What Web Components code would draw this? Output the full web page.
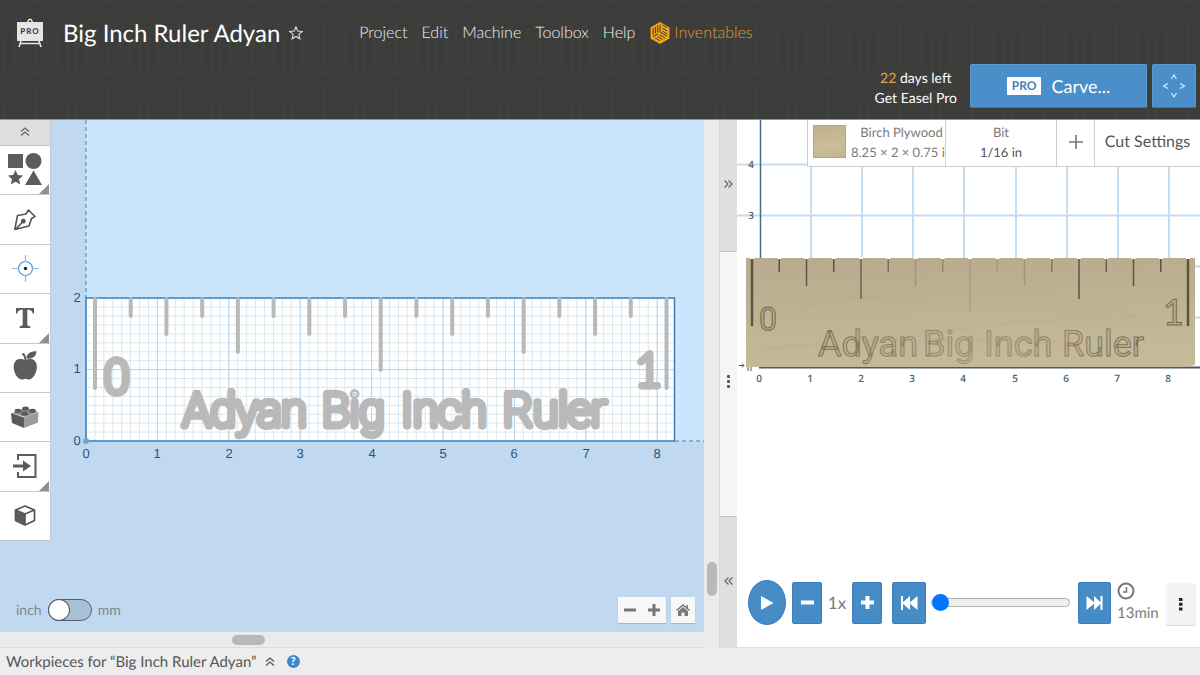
<!DOCTYPE html>
<html lang="en">
<head>
<meta charset="utf-8">
<meta name="viewport" content="width=device-width, initial-scale=1">
<title>Big Inch Ruler Adyan</title>
<style>
  html, body { margin: 0; height: 100%; }
  body { font-family: Lato, "Liberation Sans", sans-serif; text-rendering: geometricPrecision; color: #555; background: #fff; overflow: hidden; }
</style>
</head>
<body>
<easel-app></easel-app>

<script>
const BASE = `<style>
  *, *::before, *::after { box-sizing: border-box; }
  button { font: inherit; color: inherit; text-rendering: inherit; border: 0; padding: 0; margin: 0; background: none; cursor: pointer; display: flex; align-items: center; justify-content: center; }
  a { color: inherit; text-decoration: none; }
  svg { display: block; flex: none; }
</style>`;

function define(name, build) {
  customElements.define(name, class extends HTMLElement {
    constructor() {
      super();
      const t = document.createElement('template');
      t.innerHTML = BASE + build(this);
      this.attachShadow({ mode: 'open' }).append(t.content.cloneNode(true));
    }
  });
}

/* ---------- header ---------- */
define('easel-header', () => `<style>
  :host { display: flex; flex-direction: column; box-sizing: border-box; position: relative; background: #3c3d3b; color: #fff; height: 120px; border-bottom: 1px solid #8495a3; }
  .weave { position: absolute; inset: 0; width: 100%; height: 100%; }
  .top { position: relative; display: flex; align-items: center; height: 64px; padding: 2px 0 0 16px; }
  .title { font-size: 24px; line-height: 32px; margin: 0 9px 0 19px; font-weight: 400; padding-top: 2px; white-space: nowrap; }
  nav { display: flex; align-items: center; gap: 14px; margin-left: 56px; font-size: 16px; line-height: 24px; font-weight: 300; color: #eee; white-space: nowrap; }
  .brand { display: flex; align-items: center; gap: 4px; color: #e09a3a; margin-left: 1px; }
  .actions { position: relative; display: flex; justify-content: flex-end; gap: 5px; padding-right: 4px; }
  .trial { text-align: center; font-size: 14px; line-height: 20px; padding: 4px 8px 0 0; }
  .trial b { font-weight: 400; color: #e8a33d; }
  .actions button { height: 44px; background: #4a8fca; border: 1px solid #5b9bd2; border-bottom-color: #3a78ae; border-radius: 2px; }
  .carve { width: 177px; gap: 10px; font-size: 18px; }
  .tag { background: #fff; color: #3c80bb; font-size: 12px; font-weight: 700; line-height: 18px; padding: 0 5px; border-radius: 1px; }
  .jog { width: 44px; }
</style>
<svg class="weave" aria-hidden="true"><defs><pattern id="w" width="72" height="124" patternUnits="userSpaceOnUse">
  <g fill="none" stroke="#474b46" stroke-width="3">
    <path d="M0 21 36 0 72 21M0 31 36 10 72 31M4 38v34M14 33v34M24 28v34M48 28v34M58 33v34M68 38v34M36 22v40M0 83l36-21 36 21M0 93l36-21 36 21M4 100v24M68 100v24M36 84v40M24 90v34M48 90v34"/>
  </g>
</pattern></defs><rect width="100%" height="100%" fill="url(#w)" opacity=".25"/></svg>
<div class="top">
  <svg width="28" height="30" viewBox="0 0 28 30" role="img" aria-label="Easel Pro"><path d="M11 5 13 1.500h2L17 5" fill="none" stroke="#e6e6e6" stroke-width="1.500"/><path fill="#e6e6e6" d="M1 4h26v19H1z"/><path d="M5 23 3 29M23 23l2 6M5 25.500h18" fill="none" stroke="#e6e6e6" stroke-width="1.600"/><text x="14" y="16" text-anchor="middle" font-size="8" font-weight="900" letter-spacing="1" fill="#3c3d3b">PRO</text></svg>
  <h1 class="title">Big Inch Ruler Adyan</h1>
  <button aria-label="Favorite"><svg width="14" height="14" viewBox="0 0 14 14"><path d="M7 .9 8.700 5l4.500.4-3.400 3 1 4.400L7 10.500l-3.800 2.300 1-4.400-3.400-3L5.300 5z" fill="none" stroke="#e0e0e0" stroke-width="1.100"/></svg></button>
  <nav>
    <a href="#project">Project</a><a href="#edit">Edit</a><a href="#machine">Machine</a><a href="#toolbox">Toolbox</a><a href="#help">Help</a>
    <a class="brand" href="#inventables"><svg width="20" height="22" viewBox="0 0 20 22"><path d="M10 0l9.500 5.500v11L10 22 .5 16.500v-11z" fill="#f0a41c"/><path d="M3.200 6v6.600M5.400 4.800v6.600M7.700 3.500v7M10 2.500v7.500M10 10l7 4M9.500 12.800l5.500 3.200M7.500 14.500l5 3M5 15.800l4.800 2.900M12.500 3l4.500 2.700M12.500 6.200l4.700 2.800M12.600 9.200l4.400 2.600M3 14.600l4.800-2.600" stroke="#3c3d3b" stroke-width="1"/></svg>Inventables</a>
  </nav>
</div>
<div class="actions">
  <a class="trial" href="#pro"><b>22</b> days left<br>Get Easel Pro</a>
  <button class="carve"><span class="tag">PRO</span>Carve...</button>
  <button class="jog" aria-label="Jog machine"><svg width="24" height="24" viewBox="0 0 24 24" fill="none" stroke="#dcebf7" stroke-width="1.200"><path d="M9.500 5 12 1l2.500 4M9.500 19l2.500 4 2.500-4M6 9.500 1.500 12 6 14.500M18 9.500l4.500 2.500L18 14.500"/></svg></button>
</div>`);

/* ---------- toolbar ---------- */
define('easel-tool', host => `<style>
  :host { display: block; box-sizing: border-box; border-bottom: 1px solid #c6c6c6; background: #fff; }
  button { width: 100%; height: 100%; position: relative; }
  .more::after { content: ""; position: absolute; right: 1px; bottom: 0; border: 5px solid; border-color: transparent #8f8f8f #8f8f8f transparent; }
</style><button class="${host.hasAttribute('more') ? 'more' : ''}" aria-label="${host.getAttribute('label')}"><slot></slot></button>`);

define('easel-toolbar', () => `<style>
  :host { display: block; box-sizing: border-box; width: 51px; border-right: 1px solid #c2cdd8; }
  .fold { width: 100%; height: 26px; padding-bottom: 3px; background: #dedede; border-bottom: 1px solid #c6c6c6; }
  .list { display: grid; grid-template-rows: repeat(8, 1fr); height: 395px; }
</style>
<button class="fold" aria-label="Collapse toolbar"><svg width="10" height="9" viewBox="0 0 10 9" fill="none" stroke="#666" stroke-width="1.200"><path d="M1 4.500l4-3.500 4 3.500M1 8.500 5 5l4 3.500"/></svg></button>
<div class="list">
  <easel-tool label="Shapes" more><svg width="34" height="34" viewBox="0 0 34 34" fill="#5c5c5c"><path d="M0 1h15v14H0zM25.500 17.500 34 32H17z"/><circle cx="25.500" cy="8" r="8"/><path d="M7.500 17l2.300 5 5.200.5-4 3.700 1.200 5.300-4.700-2.800-4.700 2.800L4 26.200 0 22.500l5.200-.5z"/></svg></easel-tool>
  <easel-tool label="Pen"><svg width="22" height="22" viewBox="0 0 22 22" fill="none" stroke="#555" stroke-width="1.600" stroke-linejoin="round"><path d="M.8 20.500 3.500 6.500 12 5l2.500-4 6.500 6.500-3.500 2-2.500 7.500z"/><path d="M1.500 20.500 8.500 13"/><circle cx="9.300" cy="12.200" r="1.600" fill="#555"/></svg></easel-tool>
  <easel-tool label="Drill point"><svg width="27" height="27" viewBox="0 0 27 27" fill="none" stroke="#4d94d6" stroke-width="1.200"><circle cx="13.500" cy="13.500" r="7"/><path d="M13.500 0v7M13.500 20v7M0 13.500h7M20 13.500h7" stroke="#8fbbe6"/><circle cx="13.500" cy="13.500" r="1.700" fill="#222" stroke="none"/></svg></easel-tool>
  <easel-tool label="Text" more><svg width="18" height="20" viewBox="0 0 18 20" fill="#5c5c5c"><path d="M0 0h18v5.500h-1.300C16 3 15 1.800 11.300 1.800V16c0 1.600.7 2 3 2.200V20H3.700v-1.800c2.300-.2 3-.6 3-2.200V1.800C3 1.800 2 3 1.300 5.500H0z"/></svg></easel-tool>
  <easel-tool label="Icons"><svg width="25" height="34" viewBox="0 0 25 34" fill="#5c5c5c"><path d="M12.300 9.300C15 8 18.500 7.200 21.500 9.500c4.500 4.500 2 13.500-2 17.300-2.500 2.600-5 1.700-7.200 1-2.300.7-4.700 1.600-7.200-1C1 23-1.400 14 3 9.500c3-2.300 6.600-1.500 9.300-.2z"/><path d="M11.500 9.500C11.500 6 10.500 4.500 8.500 3.200L10.500 2c2 1.500 2.800 3.500 2.800 7.500z"/><path d="M13.300 7.500C13.500 3 17 .3 23.500.3c-.5 5.500-4 8-10.200 7.200z"/></svg></easel-tool>
  <easel-tool label="Apps"><svg width="28" height="22" viewBox="0 0 28 22"><path fill="#8f8f8f" d="M1 7 14 2l13 4-13 5z"/><path fill="#5a5a5a" d="M0 7l13 4.500V22L1 17z"/><path fill="#9c9c9c" d="M13 11.500 27.500 6l-.5 10.500L13 22z"/><g fill="#5a5a5a"><ellipse cx="14.500" cy="2.500" rx="3.400" ry="2"/><ellipse cx="7" cy="4.800" rx="3.400" ry="2"/><ellipse cx="21.500" cy="4.800" rx="3.400" ry="2"/><ellipse cx="13.500" cy="7.600" rx="3.400" ry="2"/></g></svg></easel-tool>
  <easel-tool label="Import" more><svg width="24" height="26" viewBox="0 0 24 26"><path d="M5 7V2h17.500v22H5v-5" fill="none" stroke="#5c5c5c" stroke-width="2"/><path fill="#5c5c5c" d="M0 11.500h10V7.500l8 5.500-8 5.500v-4H0z"/></svg></easel-tool>
  <easel-tool label="3D"><svg width="22" height="21" viewBox="0 0 22 21"><path d="M11 1l9.500 4v10.500L11 20l-9.500-4.500V5z" fill="#fff" stroke="#555" stroke-width="1.700" stroke-linejoin="round"/><path d="M1.500 5 11 9v11l-9.500-4.500z" fill="#5c5c5c"/><path d="M1.500 5 11 9l9.500-4M11 9v11" fill="none" stroke="#555" stroke-width="1.600"/></svg></easel-tool>
</div>`);

/* ---------- 2D design canvas ---------- */
const IN = 71.400, X0 = 86, Y0 = 321;
const seq = n => Array.from({ length: n }, (_, i) => i);
const reach = i => i === 0 || i === 16 ? 268 : i === 8 ? 250 : i % 4 === 0 ? 232 : i % 2 === 0 ? 214 : 196;

define('design-canvas', () => {
  const minor = seq(67).map(i => `M${X0 + i * IN / 8} 178V321`).join('') + seq(16).map(i => `M86 ${Y0 - i * IN / 8}H675`).join('');
  const major = seq(9).map(i => `M${X0 + i * IN} 178V321`).join('') + `M86 ${Y0 - IN}H675`;
  const ticks = seq(17).map(i => `M${95 + i * 35.720} 179V${reach(i)}`).join('');
  return `<style>
  :host { display: block; position: relative; overflow: hidden; background: #c0d9f0; }
  .art { position: absolute; inset: 0; width: 100%; height: 100%; }
  .axis { font: 13px "Liberation Sans", sans-serif; fill: #2f5273; }
  .cut { font: 100 46px Roboto, sans-serif; fill: #b9b9b9; stroke: #b9b9b9; stroke-width: 7; stroke-linejoin: round; }
  .one { font-family: Lato, sans-serif; }
  easel-toolbar { position: absolute; left: 0; top: 0; }
  .over { position: absolute; left: 16px; right: 9px; bottom: 9px; display: flex; align-items: center; gap: 5px; }
  label { display: flex; align-items: center; gap: 6px; font-size: 14px; line-height: 20px; color: #7b8894; margin-right: auto; }
  input { appearance: none; width: 44px; height: 22px; margin: 0; border: 1px solid #53606c; border-radius: 11px; background: #a9bfd4; display: flex; }
  input::before { content: ""; width: 20px; height: 20px; border-radius: 50%; background: #fff; box-shadow: 0 0 0 1px #53606c; }
  input:checked { justify-content: flex-end; }
  .zoom { display: flex; background: #f7f7f7; box-shadow: 0 1px 1px #a9b6c2; }
  .zoom button { width: 24px; height: 26px; }
  </style>
  <svg class="art">
    <rect x="86" width="100%" height="321" fill="#cbe5fc"/>
    <path d="M86 0V178M675 321H3000" fill="none" stroke="#4380b4" stroke-dasharray="4 3"/>
    <path d="M86 178h589v143H86z" fill="#fff"/>
    <path d="${minor}" stroke="#dbe8f0" fill="none"/>
    <path d="${major}" stroke="#b9d5ee" fill="none"/>
    <path d="M86 178H674.500V321H86z" fill="none" stroke="#3a7fb9" stroke-width="1.500"/>
    <circle cx="86" cy="321" r="3" fill="#6ca5d4"/>
    <path d="${ticks}" stroke="#b9b9b9" stroke-width="4" stroke-linecap="round"/>
    <g class="cut">
      <text x="183" y="306">Adyan</text><text x="322" y="306">Big</text><text x="401" y="306">Inch</text><text x="503" y="306">Ruler</text>
      <text x="104" y="273">0</text><text class="one" x="635" y="266">1</text>
    </g>
    <g class="axis" text-anchor="middle">
      ${seq(9).map(i => `<text x="${Math.round(X0 + i * IN)}" y="338">${i}</text>`).join('')}
      <text x="77" y="325">0</text><text x="77" y="253">1</text><text x="77" y="182">2</text>
    </g>
  </svg>
  <easel-toolbar></easel-toolbar>
  <div class="over">
    <label>inch <input type="checkbox" role="switch" aria-label="Use millimetres"> mm</label>
    <div class="zoom">
      <button aria-label="Zoom out"><svg width="12" height="12" viewBox="0 0 12 12"><path fill="#777" d="M0 4.500h12v3H0z"/></svg></button>
      <button aria-label="Zoom in"><svg width="12" height="12" viewBox="0 0 12 12"><path fill="#777" d="M0 4.500h4.500V0h3v4.500H12v3H7.500V12h-3V7.500H0z"/></svg></button>
    </div>
    <div class="zoom"><button aria-label="Home"><svg width="14" height="12" viewBox="0 0 14 12"><path fill="#777" d="M7 3l5 4.200V12H8.500V8.500h-3V12H2V7.200z"/><path d="M.5 6.500 7 1l6.500 5.500" fill="none" stroke="#777" stroke-width="1.500"/><path fill="#777" d="M10.500 1H12v4l-1.500-1.300z"/></svg></button></div>
  </div>`;
});

/* ---------- scrollbars and splitter ---------- */
define('scroll-track', host => {
  const v = host.hasAttribute('vertical');
  return `<style>
  :host { display: flex; background: #e9ebed; ${v ? 'flex-direction: column; align-items: center; border-right: 1px solid #d8dadc;' : 'align-items: center; border-bottom: 1px solid #dcdcdc;'} }
  i { background: #b9b9b9; border-radius: 5px; ${v ? 'width: 10px; height: 34px; margin-top: auto; margin-bottom: 52px;' : 'height: 10px; width: 33px; margin-left: 33%;'} }
  </style><i></i>`;
});

define('pane-splitter', () => `<style>
  :host { display: flex; flex-direction: column; background: #f5f5f5; }
  button { height: 132px; padding-bottom: 3px; background: #dfdfdf; border: 0 solid #c8c8c8; }
  .a { border-bottom-width: 1px; } .b { border-top-width: 1px; }
  .grip { flex: 1; display: flex; flex-direction: column; align-items: center; justify-content: center; gap: 2px; padding-bottom: 5px; }
  .grip i { width: 3px; height: 3px; border-radius: 1px; background: #555; }
</style>
<button class="a" aria-label="Expand design"><svg width="9" height="8" viewBox="0 0 9 8" fill="none" stroke="#666" stroke-width="1.200"><path d="M.5.5 4 4 .5 7.500M4.500.5 8 4 4.500 7.500"/></svg></button>
<div class="grip"><i></i><i></i><i></i></div>
<button class="b" aria-label="Expand preview"><svg width="9" height="8" viewBox="0 0 9 8" fill="none" stroke="#666" stroke-width="1.200"><path d="M8.500.5 5 4l3.500 3.500M4.500.5 1 4l3.500 3.500"/></svg></button>`);

/* ---------- material / bit strip ---------- */
define('cut-setup', () => `<style>
  :host { display: flex; box-sizing: border-box; background: #fff; border: 1px solid #cfcfcf; border-width: 0 0 1px 1px; height: 47px; font-size: 13px; line-height: 20px; color: #555; }
  button { border-left: 1px solid #cfcfcf; white-space: nowrap; padding-bottom: 3px; }
  .mat { width: 137px; border: 0; overflow: hidden; justify-content: flex-start; padding-left: 5px; gap: 5px; color: #7a7a7a; }
  .swatch { width: 33px; height: 33px; flex: none; background: linear-gradient(170deg, #c0b08c, #cbbd98 60%, #c4b590); border: 1px solid #b5a682; }
  .mat span:last-child { flex: none; }
  .bit { width: 111px; flex-direction: column; }
  small { font-size: 13px; color: #7a7a7a; }
  .add { width: 38px; } .cut { width: 106px; font-size: 16px; }
</style>
<button class="mat"><span class="swatch"></span><span>Birch Plywood<br>8.25 × 2 × 0.75 in</span></button>
<button class="bit"><small>Bit</small><span>1/16 in</span></button>
<button class="add" aria-label="Add bit"><svg width="14" height="14" viewBox="0 0 14 14" stroke="#777" stroke-width="1.600"><path d="M7 0v14M0 7h14"/></svg></button>
<button class="cut">Cut Settings</button>`);

/* ---------- playback controls ---------- */
define('play-controls', () => `<style>
  :host { display: flex; box-sizing: border-box; align-items: center; height: 45px; padding: 0 4px 0 11px; color: #7a7a7a; font-size: 17px; }
  button { height: 42px; background: #468cc6; border: 1px solid #3a7db8; border-radius: 2px; flex: none; }
  .play { width: 38px; height: 45px; border-radius: 50%; margin-right: 6px; }
  .step { width: 30px; } .speed { width: 30px; text-align: center; line-height: 24px; }
  .skip { width: 34px; margin-left: 10px; }
  .end { width: 33px; margin-left: 8px; }
  input { appearance: none; flex: 1; min-width: 0; height: 18px; margin: 0 0 0 5px; background: none; }
  input::-webkit-slider-runnable-track { height: 9px; border: 1px solid #b0b0b0; border-radius: 5px; background: #efefef; }
  input::-webkit-slider-thumb { appearance: none; width: 17px; height: 17px; margin-top: -5px; border-radius: 50%; background: #0075ff; }
  .time { margin-left: 6px; width: 49px; font-size: 15px; line-height: 20px; flex: none; }
  .time svg { margin-bottom: 3px; }
  .more { width: 30px; background: #f4f4f4; border: 0; box-shadow: 0 1px 1px #d5d5d5; align-self: flex-end; }
</style>
<button class="play" aria-label="Play"><svg width="14" height="14" viewBox="0 0 14 14"><path fill="#fff" d="M1 0l12.500 7L1 14z"/></svg></button>
<button class="step" aria-label="Slower"><svg width="13" height="13" viewBox="0 0 13 13"><path fill="#fff" d="M0 4.500h13v4H0z"/></svg></button>
<span class="speed">1x</span>
<button class="step" aria-label="Faster"><svg width="13" height="13" viewBox="0 0 13 13"><path fill="#fff" d="M0 4.500h4.500V0h4v4.500H13v4H8.500V13h-4V8.500H0z"/></svg></button>
<button class="skip" aria-label="Skip to start"><svg width="17" height="14" viewBox="0 0 17 14"><path fill="#fff" d="M0 0h2v6.300L9 0v6.300L16.500 0v14L9 7.700V14L2 7.700V14H0z"/></svg></button>
<input type="range" min="0" max="100" value="0" aria-label="Simulation progress">
<button class="end" aria-label="Skip to end"><svg width="17" height="14" viewBox="0 0 17 14"><path fill="#fff" d="M16.500 0h-2v6.300L8 0v6.300L.5 0v14L8 7.700V14l6.500-6.300V14h2z"/></svg></button>
<div class="time"><svg width="18" height="18" viewBox="0 0 18 18" fill="none" stroke="#777" stroke-width="2"><circle cx="9" cy="9" r="7.500"/><path d="M9.500 5v5H6" stroke-width="1.500"/></svg>13min</div>
<button class="more" aria-label="More options"><svg width="4" height="13" viewBox="0 0 4 13" fill="#222"><path d="M0 0h3.500v3H0zM0 4.700h3.500v3H0zM0 9.400h3.500v3H0z"/></svg></button>`);

/* ---------- 3D preview ---------- */
define('carve-preview', () => {
  const gx = seq(9).map(i => Math.round(22.500 + i * 51.200));
  const depth = i => i === 0 || i === 16 ? 206 : i === 8 ? 192 : i % 4 === 0 ? 179 : i % 2 === 0 ? 166 : 152;
  const shade = ['#5e5440','#5e5440','#5e5440','#5e5440','#6b604b','#7a6f58','#a3977b','#94886d','#aa9e82','#a59a7e','#a3977b','#857a61','#5e5440','#6b604b','#5e5440','#5e5440','#5e5440'];
  return `<style>
  :host { display: flex; box-sizing: border-box; flex-direction: column; position: relative; overflow: hidden; background: #fff; border-bottom: 1px solid #ddd; }
  .scene { width: 100%; flex: 1; min-height: 0; }
  .axis { font: 600 10px "Open Sans", sans-serif; fill: #4c6478; }
  .carved { font: 400 36px Roboto, sans-serif; fill: #bbae8c; stroke: url(#depth); stroke-width: 1; }
  .digit { font-size: 32px; }
  .one { font-family: Lato, sans-serif; font-size: 36px; }
  cut-setup { position: absolute; right: 0; top: 0; }
  play-controls { margin-bottom: 22px; }
  </style>
  <svg class="scene">
    <defs>
      <linearGradient id="wood" x1="0" y1="0" x2=".15" y2="1"><stop stop-color="#b9ab8d"/><stop offset=".5" stop-color="#beb293"/><stop offset="1" stop-color="#c4ba98"/></linearGradient>
      <linearGradient id="depth" gradientUnits="userSpaceOnUse" x1="20" x2="450"><stop stop-color="#6e634c"/><stop offset=".25" stop-color="#85795e"/><stop offset=".5" stop-color="#9c9074"/><stop offset=".75" stop-color="#8b7f65"/><stop offset="1" stop-color="#6e634c"/></linearGradient>
    </defs>
    <path d="${gx.slice(1).map(x => `M${x} 0V247`).join('')}M0 44.500H3000M0 95.500H3000M400 146.500H3000M400 197.500H3000" stroke="#c6dcf0" stroke-width="2" fill="none"/>
    <path d="M23.500 0V150" stroke="#456b8d" stroke-width="1.500"/>
    <path d="M22 247.500H3000" stroke="#4c5a60" stroke-width="2"/>
    <path d="M9 138H458V245L448 247H9z" fill="url(#wood)"/>
    <path d="M60 190q60-20 90-10t60-14M180 215q90-16 240-20M20 230q120-14 300-8" stroke="#b0a27e" stroke-opacity=".12" fill="none" stroke-width="3"/>
    ${seq(17).map(i => `<path d="M${15 + i * 27.250} 138V${depth(i)}" stroke="${shade[i]}" stroke-width="${i % 16 ? 1.500 : 2.500}"/><path d="M${13 + i * 27.250} 138h4" stroke="#fff" stroke-width="2"/>`).join('')}
    <g class="carved">
      <text x="81" y="236">Adyan</text><text x="186" y="236">Big</text><text x="247" y="236">Inch</text><text x="325" y="236">Ruler</text>
      <text class="digit" x="22" y="210">0</text><text class="one" x="426" y="205">1</text>
    </g>
    <path d="M2 245.500h5M5 243.500l2 2-2 2M11 247v4M14 247v4" stroke="#555" fill="none"/>
    <g class="axis" text-anchor="middle">
      ${gx.map((x, i) => `<text x="${x - 1}" y="262">${i}</text>`).join('')}
      <text x="14" y="48">4</text><text x="14" y="99">3</text>
    </g>
  </svg>
  <play-controls></play-controls>
  <cut-setup></cut-setup>`;
});

/* ---------- footer ---------- */
define('workpiece-bar', () => `<style>
  :host { display: flex; box-sizing: border-box; align-items: center; gap: 8px; height: 27px; padding-left: 6px; background: #ededed; color: #555; font-size: 15px; line-height: 24px; }
  .help { margin-left: 4px; width: 13px; height: 13px; border-radius: 50%; background: #3f87c8; color: #fff; font-size: 11px; font-weight: 900; line-height: 13px; }
</style>
<span>Workpieces for “Big Inch Ruler Adyan”</span>
<button aria-label="Show workpieces"><svg width="10" height="9" viewBox="0 0 10 9" fill="none" stroke="#555" stroke-width="1.300"><path d="M1 4.500l4-3.500 4 3.500M1 8.500 5 5l4 3.500"/></svg></button>
<button class="help" aria-label="Help">?</button>`);

define('easel-app', () => `<style>
  :host { display: grid; grid-template-rows: auto minmax(0, 1fr) auto; height: 100vh; }
  main { display: grid; grid-template-columns: minmax(0, 704fr) 16px 17px minmax(0, 463fr); grid-template-rows: minmax(0, 1fr) 16px; min-height: 0; }
  design-canvas { grid-area: 1 / 1; }
  scroll-track { grid-area: 2 / 1; }
  scroll-track[vertical] { grid-area: 1 / 2 / 3 / 3; }
  pane-splitter { grid-area: 1 / 3 / 3 / 4; }
  carve-preview { grid-area: 1 / 4 / 3 / 5; }
</style>
<easel-header></easel-header>
<main>
  <design-canvas></design-canvas>
  <scroll-track></scroll-track>
  <scroll-track vertical></scroll-track>
  <pane-splitter></pane-splitter>
  <carve-preview></carve-preview>
</main>
<workpiece-bar></workpiece-bar>`);
</script>
</body>
</html>
